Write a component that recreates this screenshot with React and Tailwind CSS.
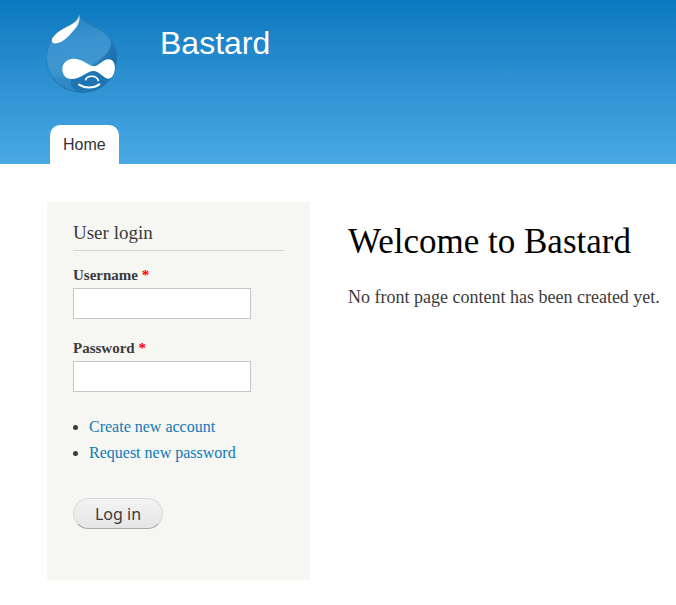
function Logo() {
  return (
    <svg viewBox="30 24 216 246" className="h-[82px] w-[72px]" role="img" aria-label="Home page">
      <defs>
        <linearGradient id="drop" x1="0.3" y1="0" x2="0.4" y2="1">
          <stop offset="0" stopColor="#2384c5" />
          <stop offset="0.35" stopColor="#3a92ce" />
          <stop offset="0.65" stopColor="#3f97d2" />
          <stop offset="1" stopColor="#2a85c2" />
        </linearGradient>
        <linearGradient id="shade" gradientUnits="userSpaceOnUse" x1="165" y1="150" x2="235" y2="190">
          <stop offset="0" stopColor="#3a90cc" />
          <stop offset="0.6" stopColor="#1f74b2" />
          <stop offset="1" stopColor="#1b6cab" />
        </linearGradient>
        <linearGradient id="shine" gradientUnits="userSpaceOnUse" x1="55" y1="110" x2="130" y2="40">
          <stop offset="0" stopColor="#fff" />
          <stop offset="0.7" stopColor="#fff" />
          <stop offset="1" stopColor="#fff" stopOpacity="0.75" />
        </linearGradient>
        <clipPath id="outline">
          <path d="M130 26C135 47 151 56 180 69C218 86 243 119 243 162C243 224 197 266 137 266C76 266 31 221 31 163C31 122 51 93 82 75C108 60 126 51 130 26Z" />
        </clipPath>
      </defs>
      <g clipPath="url(#outline)">
        <rect x="30" y="24" width="216" height="246" fill="url(#drop)" />
        <path d="M170 182C207 156 232 140 222 100L250 110V270H120C150 250 150 212 170 182Z" fill="url(#shade)" />
        <path d="M106 225C130 226 145 210 174 200C200 208 203 221 216 224L214 236L180 270H130C106 256 98 240 106 225Z" fill="#1d75b3" />
        <path d="M42 218C66 220 88 220 106 226C98 240 106 256 137 268C94 264 60 248 42 218Z" fill="#3389c5" />
        <path d="M130 26C126 51 108 60 82 75C51 93 31 122 31 163C31 221 76 265 137 265C197 265 242 224 242 162" fill="none" stroke="#1f75b2" strokeWidth="4" />
        <path d="M130 26C135 47 151 56 180 69C218 86 242 119 242 162" fill="none" stroke="#2378b3" strokeWidth="5" />
      </g>
      <path d="M130 32C133 52 126 66 112 80C98 97 82 114 62 118C48 120 44 110 50 101C60 87 74 79 90 70C111 59 126 50 130 32Z" fill="url(#shine)" />
      <path d="M112 164C141 164 158 186 174 187C187 187 201 166 218 166C233 166 239 183 236 199C233 215 226 225 216 224C203 223 192 203 174 201C153 200 136 225 106 225C88 225 79 211 79 195C79 177 94 164 112 164Z" fill="#fff" />
      <path d="M149 227C154 213 181 213 187 229" fill="none" stroke="#fff" strokeWidth="5" strokeLinecap="round" />
      <path d="M129 242C147 254 173 253 190 241" fill="none" stroke="#fff" strokeWidth="6" strokeLinecap="round" />
    </svg>
  );
}

function Field({ id, label, type }) {
  return (
    <div>
      <label htmlFor={id} className="block text-[15px] leading-[18px] font-bold">
        {label} <span className="text-[#ff0000]">*</span>
      </label>
      <input
        id={id}
        type={type}
        required
        className="mt-1 block h-[31px] w-[178px] border border-[#c6c6c6] bg-white px-1 text-[15px]"
      />
    </div>
  );
}

export default function App() {
  return (
    <div className="min-h-screen bg-white font-['Liberation_Serif',serif] text-[#3b3b3b]">
      <header className="bg-linear-to-b from-[#0779bf] to-[#48a9e4] pt-3 font-['Liberation_Sans',sans-serif]">
        <div className="flex gap-[42px] pl-[46px]">
          <a href="#home">
            <Logo />
          </a>
          <a href="#home" className="pt-3 text-[32px] leading-[38px] text-white">
            Bastard
          </a>
        </div>
        <nav className="mt-[31px] flex pl-[50px]">
          <a href="#home" className="rounded-t-[10px] bg-white px-[13px] text-base leading-[39px] text-[#333]">
            Home
          </a>
        </nav>
      </header>

      <div className="flex items-start gap-[38px] pt-[38px] pl-[47px]">
        <aside className="w-[263px] shrink-0 bg-[#f6f6f2] px-[26px] pt-[21px] pb-[51px]">
          <h2 className="border-b border-[#d6d6d6] pb-[7px] text-[19px] leading-5">User login</h2>
          <form className="pt-[15px]" onSubmit={(event) => event.preventDefault()}>
            <div className="flex flex-col gap-5">
              <Field id="username" label="Username" type="text" />
              <Field id="password" label="Password" type="password" />
            </div>
            <ul className="mt-[22px] list-disc pl-4 text-[16px] leading-[26px]">
              <li>
                <a href="#register" className="text-[#0f7ab8]">Create new account</a>
              </li>
              <li>
                <a href="#reset" className="text-[#0f7ab8]">Request new password</a>
              </li>
            </ul>
            <button
              type="submit"
              className="mt-8 block h-[31px] w-[90px] rounded-full border border-[#d8d8d8] border-b-[#a8a8a8] bg-linear-to-b from-[#f3f3f3] to-[#e6e6e6] font-['Noto_Sans',sans-serif] text-base leading-7"
            >
              Log in
            </button>
          </form>
        </aside>
        <main className="min-w-0 pt-[19px]">
          <h1 className="text-[35px] leading-[42px] text-black">Welcome to Bastard</h1>
          <p className="mt-[23px] text-[18px] leading-[22px]">No front page content has been created yet.</p>
        </main>
      </div>
    </div>
  );
}
